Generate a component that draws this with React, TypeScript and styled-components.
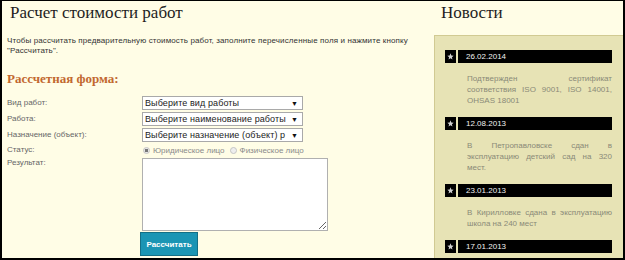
import React from 'react';
import styled, { createGlobalStyle } from 'styled-components';

const GlobalStyle = createGlobalStyle`
    body {
        margin: 0;
        background: #ffffff;
    }
`;

const Frame = styled.div`
    box-sizing: border-box;
    width: 625px;
    height: 260px;
    border: 2px solid #000;
    border-top-width: 1px;
    background: #fffde6;
    display: flex;
    overflow: hidden;
    font-family: "Liberation Sans", Arial, sans-serif;
`;

const Main = styled.div`
    width: 428px;
    padding-left: 5px;
    box-sizing: border-box;
`;

const Side = styled.div`
    flex: 1;
    display: flex;
    flex-direction: column;
`;

const PageTitle = styled.h1<{ $indent?: number }>`
    margin: 2px 0 0 ${p => p.$indent ?? 3}px;
    font-family: "Liberation Serif", "Times New Roman", serif;
    font-weight: normal;
    font-size: 17px;
    line-height: 20px;
    color: #1e1e1e;
`;

const Intro = styled.p`
    margin: 13px 0 0 0;
    font-size: 8px;
    line-height: 10px;
    letter-spacing: 0.12px;
    color: #333;
    width: 418px;
`;

const FormHeading = styled.h2`
    margin: 16px 0 0 0;
    font-family: "Liberation Serif", "Times New Roman", serif;
    font-size: 13px;
    line-height: 14px;
    font-weight: bold;
    color: #c2682f;
`;

const FormGrid = styled.div`
    margin-top: 10px;
    display: grid;
    grid-template-columns: 135px 186px;
    row-gap: 2px;
`;

const Label = styled.div<{ $top?: boolean }>`
    font-size: 8px;
    line-height: 10px;
    color: #666;
    align-self: ${p => (p.$top ? 'start' : 'center')};
`;

const SelectBox = styled.div`
    box-sizing: border-box;
    width: 161px;
    height: 14px;
    background: #fff;
    border: 1px solid #a9a9a9;
    display: flex;
    align-items: center;
    padding: 0 4px 0 2px;
    font-size: 9px;
    letter-spacing: 0.1px;
    color: #222;
`;

const SelectText = styled.span`
    flex: 1;
    overflow: hidden;
    white-space: nowrap;
`;

const SelectArrow = styled.span`
    font-size: 7px;
    color: #111;
    margin-left: 5px;
`;

const RadioRow = styled.div`
    height: 12px;
    display: flex;
    align-items: center;
    gap: 3px;
    font-size: 8px;
    color: #8a8a8a;
    padding-left: 1px;
`;

const Radio = styled.span<{ $checked?: boolean }>`
    box-sizing: border-box;
    width: 7px;
    height: 7px;
    border-radius: 50%;
    border: 1px solid #c4c4c4;
    background: ${p => (p.$checked ? 'radial-gradient(circle, #777 0 1.5px, #e8e8e8 2px)' : '#eee')};
`;

const RadioLabel = styled.span`
    margin-right: 2px;
`;

const ResultArea = styled.textarea`
    box-sizing: border-box;
    width: 186px;
    height: 73px;
    border: 1px solid #b0b0b0;
    background: #fff;
    margin: 0;
    display: block;
`;

const SubmitButton = styled.button`
    box-sizing: border-box;
    margin-top: 1px;
    width: 58px;
    height: 24px;
    background: #1b95b4;
    border: 1px solid #146f86;
    color: #fff;
    font-family: "Liberation Sans", Arial, sans-serif;
    font-weight: bold;
    font-size: 8px;
    padding: 0;
    margin-left: -2px;
`;

const Panel = styled.div`
    margin: 12px 0 0 4px;
    flex: 1;
    background: #e7e3b5;
    border: 1px solid #d1ca92;
    border-right: none;
    padding: 14px 11px 0 10px;
`;

const NewsItem = styled.div`
    margin-bottom: 11px;
`;

const DateBar = styled.div`
    display: flex;
    gap: 2px;
    height: 13px;
`;

const StarBox = styled.div`
    width: 11px;
    background: #000;
    display: flex;
    align-items: center;
    justify-content: center;
`;

const DateText = styled.div`
    flex: 1;
    background: #000;
    color: #f0f0f0;
    font-size: 8px;
    line-height: 13px;
    padding-left: 8px;
`;

const NewsText = styled.p`
    margin: 10px 0 0 22px;
    font-size: 8px;
    line-height: 11px;
    color: #8a8a78;
    text-align: justify;
`;

const Star = () => (
    <svg width="7" height="7" viewBox="0 0 10 10">
        <polygon
            points="5,0.5 6.2,3.6 9.5,3.8 7,5.9 7.8,9.2 5,7.4 2.2,9.2 3,5.9 0.5,3.8 3.8,3.6"
            fill="#d0d0d0"
        />
    </svg>
);

const news = [
    { date: '26.02.2014', text: 'Подтвержден сертификат соответствия ISO 9001, ISO 14001, OHSAS 18001' },
    { date: '12.08.2013', text: 'В Петропавловске сдан в эксплуатацию детский сад на 320 мест.' },
    { date: '23.01.2013', text: 'В Кирилловке сдана в эксплуатацию школа на 240 мест' },
    { date: '17.01.2013', text: '' },
];

export default function App() {
    return (
        <>
            <GlobalStyle />
            <Frame>
                <Main>
                    <PageTitle>Расчет стоимости работ</PageTitle>
                    <Intro>
                        Чтобы рассчитать предварительную стоимость работ, заполните перечисленные поля и нажмите кнопку
                        "Рассчитать".
                    </Intro>
                    <FormHeading>Рассчетная форма:</FormHeading>
                    <FormGrid>
                        <Label>Вид работ:</Label>
                        <SelectBox>
                            <SelectText>Выберите вид работы</SelectText>
                            <SelectArrow>▼</SelectArrow>
                        </SelectBox>
                        <Label>Работа:</Label>
                        <SelectBox>
                            <SelectText>Выберите наименование работы</SelectText>
                            <SelectArrow>▼</SelectArrow>
                        </SelectBox>
                        <Label>Назначение (объект):</Label>
                        <SelectBox>
                            <SelectText>Выберите назначение (объект) р</SelectText>
                            <SelectArrow>▼</SelectArrow>
                        </SelectBox>
                        <Label>Статус:</Label>
                        <RadioRow>
                            <Radio $checked />
                            <RadioLabel>Юридическое лицо</RadioLabel>
                            <Radio />
                            <RadioLabel>Физическое лицо</RadioLabel>
                        </RadioRow>
                        <Label $top>Результат:</Label>
                        <div>
                            <ResultArea />
                            <SubmitButton>Рассчитать</SubmitButton>
                        </div>
                    </FormGrid>
                </Main>
                <Side>
                    <PageTitle $indent={11}>Новости</PageTitle>
                    <Panel>
                        {news.map(n => (
                            <NewsItem key={n.date}>
                                <DateBar>
                                    <StarBox><Star /></StarBox>
                                    <DateText>{n.date}</DateText>
                                </DateBar>
                                {n.text && <NewsText>{n.text}</NewsText>}
                            </NewsItem>
                        ))}
                    </Panel>
                </Side>
            </Frame>
        </>
    );
}
